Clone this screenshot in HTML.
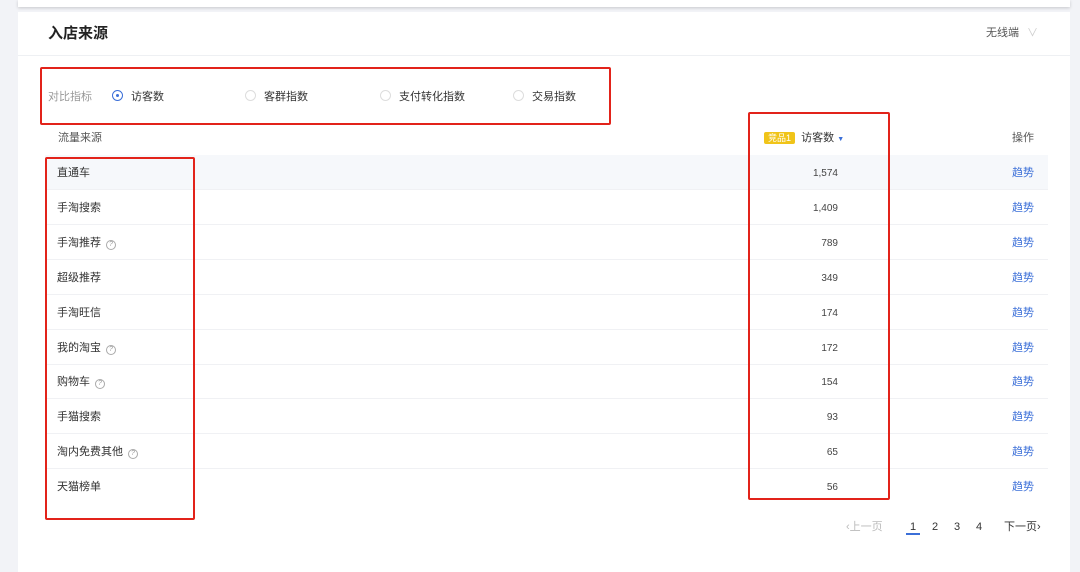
<!DOCTYPE html>
<html><head><meta charset="utf-8"><style>
body{margin:0;width:1080px;height:570px;background:#f2f3f7;font-family:"Liberation Sans","Noto Sans CJK SC",sans-serif;position:relative;overflow:hidden;font-size:11px;color:#333;line-height:14px}
.top{position:absolute;left:18px;top:0;width:1052px;height:7px;background:#fff;box-shadow:0 1px 3px rgba(0,0,0,.18)}
.card{position:absolute;left:18px;top:12px;width:1052px;height:560px;background:#fff}
.t{position:absolute;left:30px;top:12px;font-size:15px;font-weight:bold;color:#222;line-height:18px}
.hl{position:absolute;left:0;top:43px;width:1052px;height:1px;background:#eef0f3}
.wx{position:absolute;right:32px;top:14px;font-size:11px;color:#555}
.wx span{color:#ccc;margin-left:8px}
.red{position:absolute;border:2px solid #e2231a;border-radius:2px}
.a{position:absolute;white-space:nowrap}
.radio{display:inline-block;width:9px;height:9px;border:1px solid #ddd;border-radius:50%;vertical-align:-1px;margin-right:8px;position:relative}
.radio.on{border-color:#3b6fd8}
.radio.on:after{content:"";position:absolute;left:3px;top:3px;width:3px;height:3px;border-radius:50%;background:#3b6fd8}
.row{position:absolute;left:45px;width:1003px;height:34px;border-bottom:1px solid #f0f1f4;line-height:34px}
.row span{position:absolute;top:1px}
.row .n{left:12px}
.row .v{right:210px;color:#444;font-size:10px;top:2px}
.row .op{right:14px;color:#3b6fd8}
.q{display:inline-block;width:8px;height:8px;border:1px solid #aaa;border-radius:50%;font-size:7px;line-height:8px;text-align:center;color:#999;margin-left:5px;vertical-align:0}
</style></head><body>
<div class="top"></div>
<div class="card">
<div class="t" style="top:13px">入店来源</div>
<div class="wx" style="top:14px">无线端<span>∨</span></div>
<div class="hl"></div>
</div>
<div class="a" style="left:48px;top:90px;color:#999">对比指标</div>
<div class="a" style="left:112px;top:90px"><i class="radio on"></i>访客数</div>
<div class="a" style="left:245px;top:90px"><i class="radio"></i>客群指数</div>
<div class="a" style="left:380px;top:90px"><i class="radio"></i>支付转化指数</div>
<div class="a" style="left:513px;top:90px"><i class="radio"></i>交易指数</div>
<div class="a" style="left:58px;top:131px;color:#555">流量来源</div>
<div class="a" style="left:764px;top:131px"><span style="background:#f0c419;color:#fff;font-size:9px;padding:1px 4px;border-radius:2px">竞品1</span>&nbsp; 访客数 <span style="color:#3b6fd8;font-size:7px">▼</span></div>
<div class="a" style="left:1012px;top:131px;color:#555">操作</div>
<div class="row" style="top:155px;background:#f6f8fb"><span class="n">直通车</span><span class="v">1,574</span><span class="op">趋势</span></div>
<div class="row" style="top:190px"><span class="n">手淘搜索</span><span class="v">1,409</span><span class="op">趋势</span></div>
<div class="row" style="top:225px"><span class="n">手淘推荐<i class="q">?</i></span><span class="v">789</span><span class="op">趋势</span></div>
<div class="row" style="top:260px"><span class="n">超级推荐</span><span class="v">349</span><span class="op">趋势</span></div>
<div class="row" style="top:295px"><span class="n">手淘旺信</span><span class="v">174</span><span class="op">趋势</span></div>
<div class="row" style="top:330px"><span class="n">我的淘宝<i class="q">?</i></span><span class="v">172</span><span class="op">趋势</span></div>
<div class="row" style="top:364px"><span class="n">购物车<i class="q">?</i></span><span class="v">154</span><span class="op">趋势</span></div>
<div class="row" style="top:399px"><span class="n">手猫搜索</span><span class="v">93</span><span class="op">趋势</span></div>
<div class="row" style="top:434px"><span class="n">淘内免费其他<i class="q">?</i></span><span class="v">65</span><span class="op">趋势</span></div>
<div class="row" style="top:469px;border:none"><span class="n">天猫榜单</span><span class="v">56</span><span class="op">趋势</span></div>
<div class="a" style="left:846px;top:520px;color:#bbb">‹上一页</div>
<div class="a" style="left:910px;top:520px;color:#333">1</div>
<div class="a" style="left:906px;top:533px;width:14px;height:2px;background:#3b6fd8"></div>
<div class="a" style="left:932px;top:520px">2</div>
<div class="a" style="left:954px;top:520px">3</div>
<div class="a" style="left:976px;top:520px">4</div>
<div class="a" style="left:1004px;top:520px">下一页›</div>
<div class="red" style="left:40px;top:67px;width:567px;height:54px"></div>
<div class="red" style="left:45px;top:157px;width:146px;height:359px"></div>
<div class="red" style="left:748px;top:112px;width:138px;height:384px"></div>
</body></html>
